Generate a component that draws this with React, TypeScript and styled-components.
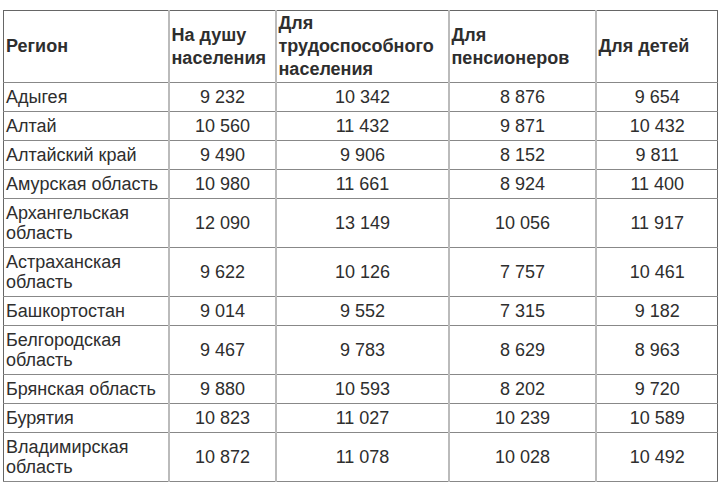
import React from "react";
import styled, { createGlobalStyle } from "styled-components";

const Global = createGlobalStyle`
  html, body { margin: 0; padding: 0; background: #ffffff; }
  body { font-family: "Liberation Sans", Arial, sans-serif; }
`;

const Page = styled.div`
  padding: 10px 4px 0 3px;
`;

const Table = styled.table`
  width: 714px;
  table-layout: fixed;
  border-collapse: collapse;
  border: 1px solid #666;
  font-family: "Liberation Sans", Arial, sans-serif;
  font-size: 18px;
  color: #2e2e2e;
`;

const HeadCell = styled.th`
  text-align: left;
  vertical-align: middle;
  font-weight: bold;
  line-height: 23px;
  padding: 1px 1px 1px 2px;
  border-top: 1px solid #666;
  border-bottom: 1px solid #888;
  border-left: 2px solid #bbb;
  border-right: 2px solid #bbb;
  height: 69px;
  &:first-child { border-left: 1px solid #666; }
  &:last-child { border-right: 1px solid #666; }
`;

const Cell = styled.td<{ $num?: boolean }>`
  text-align: ${(p) => (p.$num ? "center" : "left")};
  vertical-align: middle;
  line-height: 20px;
  padding: 4px 1px 4px 2px;
  border-bottom: 1px solid #888;
  border-left: 2px solid #bbb;
  border-right: 2px solid #bbb;
  &:first-child { border-left: 1px solid #666; }
  &:last-child { border-right: 1px solid #666; }
`;

const Row = styled.tr``;

const rows: [string, string, string, string, string][] = [
  ["Адыгея", "9 232", "10 342", "8 876", "9 654"],
  ["Алтай", "10 560", "11 432", "9 871", "10 432"],
  ["Алтайский край", "9 490", "9 906", "8 152", "9 811"],
  ["Амурская область", "10 980", "11 661", "8 924", "11 400"],
  ["Архангельская область", "12 090", "13 149", "10 056", "11 917"],
  ["Астраханская область", "9 622", "10 126", "7 757", "10 461"],
  ["Башкортостан", "9 014", "9 552", "7 315", "9 182"],
  ["Белгородская область", "9 467", "9 783", "8 629", "8 963"],
  ["Брянская область", "9 880", "10 593", "8 202", "9 720"],
  ["Бурятия", "10 823", "11 027", "10 239", "10 589"],
  ["Владимирская область", "10 872", "11 078", "10 028", "10 492"],
];

const widths = [165, 107, 173, 147, 122];

export default function App() {
  return (
    <>
      <Global />
      <Page>
        <Table>
          <colgroup>
            {widths.map((w, i) => (
              <col key={i} style={{ width: w }} />
            ))}
          </colgroup>
          <thead>
            <Row>
              <HeadCell>Регион</HeadCell>
              <HeadCell>На душу населения</HeadCell>
              <HeadCell>Для трудоспособного населения</HeadCell>
              <HeadCell>Для пенсионеров</HeadCell>
              <HeadCell>Для детей</HeadCell>
            </Row>
          </thead>
          <tbody>
            {rows.map((r) => (
              <Row key={r[0]}>
                <Cell>{r[0]}</Cell>
                <Cell $num>{r[1]}</Cell>
                <Cell $num>{r[2]}</Cell>
                <Cell $num>{r[3]}</Cell>
                <Cell $num>{r[4]}</Cell>
              </Row>
            ))}
          </tbody>
        </Table>
      </Page>
    </>
  );
}
